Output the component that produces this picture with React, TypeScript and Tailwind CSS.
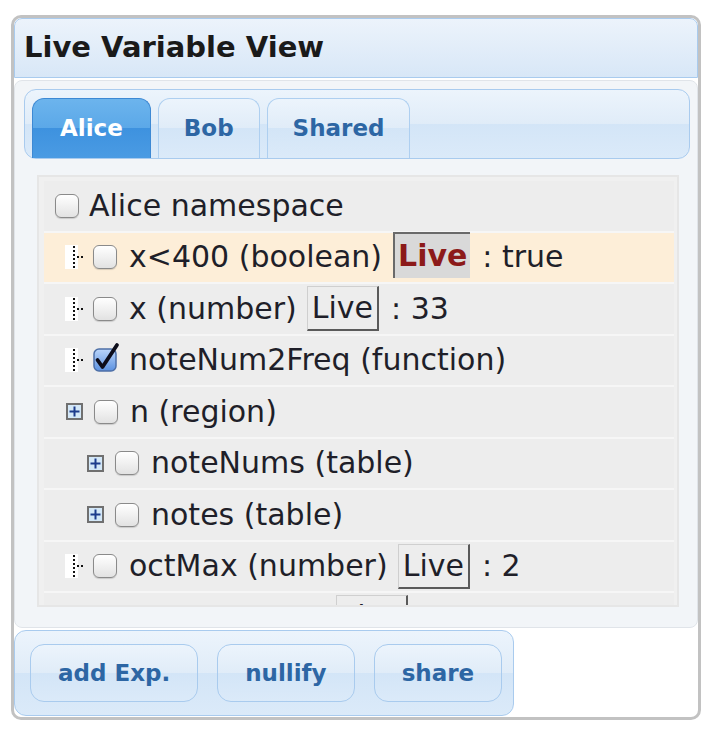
import React from "react";

type Row = {
  level: 0 | 1 | 2;
  icon?: "line" | "plus";
  checked?: boolean;
  label: string;
  live?: "hot" | "plain";
  value?: string;
  hot?: boolean;
};

const rows: Row[] = [
  { level: 0, label: "Alice namespace" },
  { level: 1, icon: "line", label: "x<400 (boolean)", live: "hot", value: ": true", hot: true },
  { level: 1, icon: "line", label: "x (number)", live: "plain", value: ": 33" },
  { level: 1, icon: "line", checked: true, label: "noteNum2Freq (function)" },
  { level: 1, icon: "plus", label: "n (region)" },
  { level: 2, icon: "plus", label: "noteNums (table)" },
  { level: 2, icon: "plus", label: "notes (table)" },
  { level: 1, icon: "line", label: "octMax (number)", live: "plain", value: ": 2" },
  { level: 1, icon: "line", label: "oct (number)", live: "plain", value: ": 0" },
];

function CheckBox({ checked }: { checked?: boolean }) {
  if (checked) {
    return (
      <svg width="24" height="24" viewBox="0 0 24 24" className="shrink-0 overflow-visible">
        <defs>
          <linearGradient id="cb" x1="0" y1="0" x2="0" y2="1">
            <stop offset="0" stopColor="#bcd6fa" />
            <stop offset="1" stopColor="#5b91e0" />
          </linearGradient>
        </defs>
        <rect x="1" y="1" width="22" height="22" rx="5" fill="url(#cb)" stroke="#4d6fa6" strokeWidth="1.5" />
        <path d="M4.5 12 L9.5 19 L24 -3" fill="none" stroke="#0d0d1a" strokeWidth="3.8" strokeLinecap="round" strokeLinejoin="round" />
      </svg>
    );
  }
  return (
    <span className="inline-block w-[24px] h-[24px] shrink-0 rounded-[6px] border-[1.5px] border-[#8a8a8a] bg-[linear-gradient(#ffffff,#e2e2e2)] shadow-[0_1px_1px_rgba(0,0,0,0.15)]" />
  );
}

function Connector() {
  return (
    <svg width="20" height="24" viewBox="0 0 20 24" className="shrink-0">
      <rect x="0" y="0" width="13" height="24" fill="#ffffff" />
      {[1, 5, 9, 13, 17, 21].map((y) => (
        <rect key={y} x="8" y={y} width="2" height="2" fill="#111" />
      ))}
      <rect x="12" y="11" width="2" height="2" fill="#111" />
      <rect x="16" y="11" width="2" height="2" fill="#111" />
    </svg>
  );
}

function Plus() {
  return (
    <span className="flex items-center justify-center w-[17px] h-[17px] shrink-0 border-2 border-[#707070] bg-[#d4e8f8]">
      <svg width="11" height="11" viewBox="0 0 11 11">
        <rect x="0.5" y="4.5" width="10" height="2" fill="#1d3c8c" />
        <rect x="4.5" y="0.5" width="2" height="10" fill="#1d3c8c" />
      </svg>
    </span>
  );
}

function LiveBox({ hot }: { hot?: boolean }) {
  if (hot) {
    return (
      <span className="ml-[11px] h-[46px] -mt-[4px] flex items-center px-[3px] bg-[#d9d9d9] border-t-2 border-l-2 border-[#6a6a6a] font-bold text-[#8c1a1a]">
        Live
      </span>
    );
  }
  return (
    <span className="ml-[10px] h-[45px] flex items-center px-[4px] border-t border-l border-t-[#cfcfcf] border-l-[#cfcfcf] border-r-2 border-b-2 border-r-[#5a5a5a] border-b-[#5a5a5a]">
      Live
    </span>
  );
}

function TreeRow({ row }: { row: Row }) {
  const pad = row.level === 0 ? "pl-[11px]" : row.level === 1 ? "pl-[21px]" : "pl-[42px]";
  return (
    <div
      className={`h-[51.5px] shrink-0 flex items-center border-b-2 border-[#f6f6f6] ${pad} ${
        row.hot ? "bg-[#fdeed8]" : "bg-[#ededed]"
      }`}
    >
      {row.icon === "line" && <Connector />}
      {row.icon === "plus" && (
        <span className="ml-[1px] mr-[11px]">
          <Plus />
        </span>
      )}
      {row.icon === "line" && <span className="w-[8px]" />}
      <CheckBox checked={row.checked} />
      <span className={row.level === 0 ? "ml-[10px]" : "ml-[12px]"}>{row.label}</span>
      {row.live && <LiveBox hot={row.live === "hot"} />}
      {row.value && <span className="ml-[12px]">{row.value}</span>}
    </div>
  );
}

const glass = "bg-[linear-gradient(#ecf4fc,#e0ecf8_50%,#d3e5f7_50%,#dbeaf9)]";

export default function App() {
  const tabs = [
    { name: "Alice", active: true },
    { name: "Bob" },
    { name: "Shared" },
  ];

  return (
    <div className="w-[715px] h-[733px] bg-white pt-[15px] pl-[11px] font-['DejaVu_Sans',sans-serif]">
      <div className="w-[690px] h-[705px] border-[3px] border-[#c2c2c2] rounded-[10px] bg-white flex flex-col overflow-hidden">
        {/* title bar */}
        <div className="h-[60px] shrink-0 flex items-center pl-[9px] border border-[#a9cbee] rounded-t-[8px] bg-[linear-gradient(#ecf3fb,#d8e7f7)]">
          <span className="text-[29px] font-bold text-[#1a1a1a]">Live Variable View</span>
        </div>

        {/* content */}
        <div className="mt-[2px] h-[548px] shrink-0 flex flex-col rounded-[8px] border border-[#e0e4e9] bg-[#f2f5f8]">
          <div className={`mt-[8px] ml-[9px] mr-[7px] h-[70px] shrink-0 flex items-end gap-[7px] pl-[7px] border border-[#a9cbee] rounded-[12px] ${glass}`}>
            {tabs.map((t) =>
              t.active ? (
                <div
                  key={t.name}
                  className="h-[60px] flex items-center px-[27px] rounded-t-[12px] border border-b-0 border-[#3d89d4] bg-[linear-gradient(#6cb4ed,#5ba8e8_50%,#3e92df_50%,#4a9be3)] text-white font-bold text-[23px]"
                >
                  {t.name}
                </div>
              ) : (
                <div
                  key={t.name}
                  className={`h-[60px] flex items-center px-[25px] rounded-t-[12px] border border-b-0 border-[#aecff0] text-[#2d66a4] font-bold text-[23px] ${glass}`}
                >
                  {t.name}
                </div>
              )
            )}
          </div>

          <div className="mt-[16px] ml-[22px] mr-[18px] h-[432px] shrink-0 overflow-hidden border-2 border-[#e6e6e6] bg-[#f0f0f0] pt-[4px] pl-[5px] pr-[3px] flex flex-col text-[30px] text-[#1f1f29] leading-none">
            {rows.map((r, i) => (
              <TreeRow key={i} row={r} />
            ))}
          </div>
        </div>

        {/* buttons */}
        <div className={`mt-[2px] w-[500px] h-[86px] shrink-0 flex items-center gap-[19px] pl-[15px] border border-[#a9cbee] rounded-[12px] ${glass}`}>
          {["add Exp.", "nullify", "share"].map((b) => (
            <button
              key={b}
              className={`h-[58px] px-[27px] rounded-[14px] border border-[#a9cbee] text-[23px] font-bold text-[#2d66a4] ${glass}`}
            >
              {b}
            </button>
          ))}
        </div>
      </div>
    </div>
  );
}
